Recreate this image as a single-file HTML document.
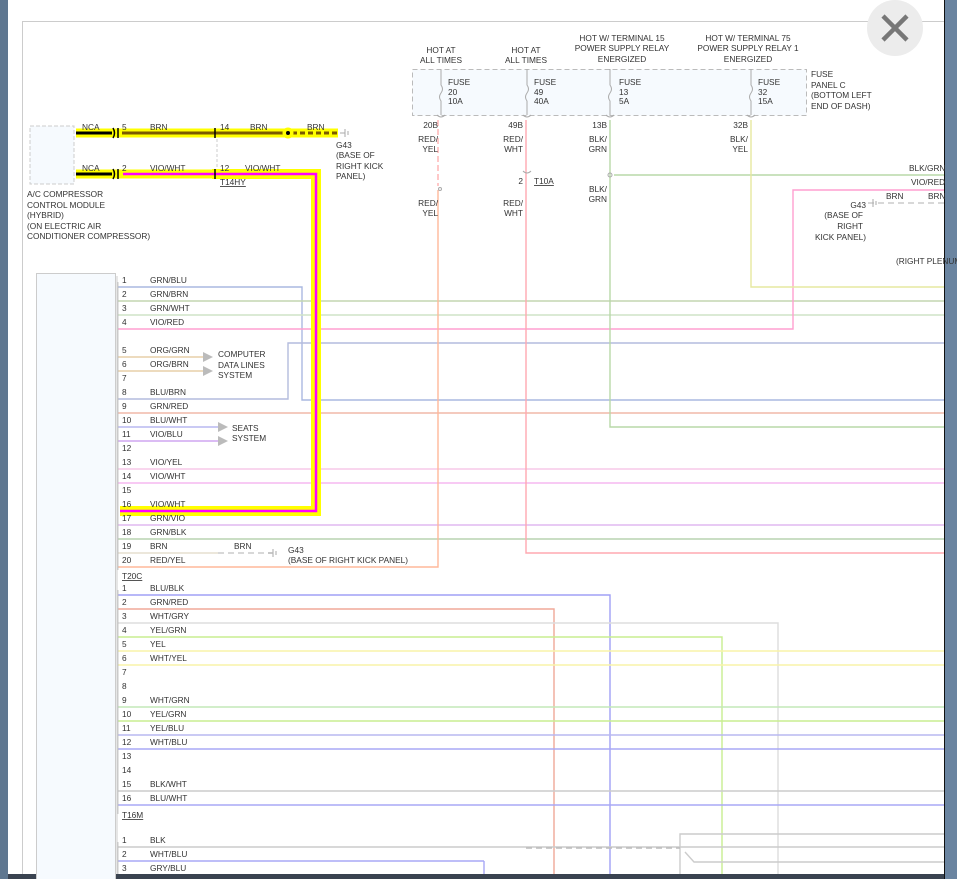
<!DOCTYPE html>
<html><head><meta charset="utf-8"><style>
html,body{margin:0;padding:0;width:957px;height:879px;overflow:hidden;background:#fff}
svg{display:block}
text{font-family:"Liberation Sans",sans-serif;font-size:8.3px;fill:#333}
</style></head><body>
<svg width="957" height="879" viewBox="0 0 957 879" xmlns="http://www.w3.org/2000/svg">
<rect x="0" y="0" width="957" height="879" fill="#fff"/>
<rect x="0" y="0" width="8" height="879" fill="#5f7790"/>
<rect x="944" y="0" width="13" height="879" fill="#6a84a0"/>
<line x1="944.5" y1="0" x2="944.5" y2="879" stroke="#111" stroke-width="1"/>
<rect x="8" y="874" width="936" height="5" fill="#3a4350"/>
<line x1="22.5" y1="21" x2="22.5" y2="874" stroke="#ccc"/>
<line x1="22" y1="21.5" x2="944" y2="21.5" stroke="#ccc"/>
<rect x="36.5" y="273.5" width="79" height="610" fill="#f6fafe" stroke="#ccc"/>
<line x1="117" y1="276" x2="117" y2="874" stroke="#ccc"/>
<rect x="30" y="126" width="44" height="58" fill="#f6fafe" stroke="#ccc" stroke-dasharray="4,2"/>
<g fill="none" stroke-width="1.4">
<polyline points="118,287 302,287 302,400 944,400" stroke="#aab8e0"/>
<line x1="118" y1="301" x2="944" y2="301" stroke="#c3d6b0"/>
<line x1="118" y1="315" x2="944" y2="315" stroke="#cfe3c7"/>
<polyline points="118,329 793,329 793,190 944,190" stroke="#ff9fd0"/>
<polyline points="118,399 288,399 288,343 944,343" stroke="#b4bcdd"/>
<line x1="118" y1="357" x2="205" y2="357" stroke="#e7cfa8"/>
<line x1="118" y1="371" x2="205" y2="371" stroke="#e7cfa8"/>
<line x1="118" y1="413" x2="944" y2="413" stroke="#f0b8a8"/>
<line x1="118" y1="427" x2="220" y2="427" stroke="#b8b8f0"/>
<line x1="118" y1="441" x2="220" y2="441" stroke="#cfa5f0"/>
<line x1="118" y1="469" x2="944" y2="469" stroke="#f7c8e8"/>
<line x1="118" y1="483" x2="944" y2="483" stroke="#f5b8f0"/>
<line x1="118" y1="525" x2="944" y2="525" stroke="#e0b8f0"/>
<line x1="118" y1="539" x2="944" y2="539" stroke="#b8d4b0"/>
<line x1="118" y1="553" x2="218" y2="553" stroke="#e6dfcf"/>
<line x1="218" y1="553" x2="272" y2="553" stroke="#ccc" stroke-dasharray="6,4"/>
<polyline points="118,567 438,567 438,190" stroke="#ffb89a"/>
<line x1="438" y1="120" x2="438" y2="186" stroke="#ffb0b0" stroke-dasharray="6,3"/>
<polyline points="526,120 526,553 944,553" stroke="#ffa8b0"/>
<polyline points="610,120 610,427 944,427" stroke="#b8d8a8"/>
<line x1="614" y1="175" x2="944" y2="175" stroke="#b8d8a8"/>
<polyline points="751,120 751,287 944,287" stroke="#e6e8a0"/>
<line x1="868" y1="203" x2="944" y2="203" stroke="#ccc" stroke-dasharray="6,4"/>
<polyline points="118,595 610,595 610,874" stroke="#a0a0f5"/>
<polyline points="118,609 554,609 554,874" stroke="#f0a898"/>
<polyline points="118,623 778,623 778,874" stroke="#ddd"/>
<polyline points="118,637 722,637 722,874" stroke="#c8ee90"/>
<line x1="118" y1="651" x2="944" y2="651" stroke="#f8f4a8"/>
<line x1="118" y1="665" x2="944" y2="665" stroke="#f8f4a8"/>
<line x1="118" y1="707" x2="944" y2="707" stroke="#c4e8b8"/>
<line x1="118" y1="721" x2="944" y2="721" stroke="#c8ee90"/>
<line x1="118" y1="735" x2="944" y2="735" stroke="#b8b8f0"/>
<line x1="118" y1="749" x2="944" y2="749" stroke="#a8a8f5"/>
<line x1="118" y1="791" x2="944" y2="791" stroke="#ccc"/>
<line x1="118" y1="805" x2="944" y2="805" stroke="#a8a8f5"/>
<line x1="118" y1="847" x2="944" y2="847" stroke="#ccc"/>
<line x1="118" y1="861" x2="484" y2="861" stroke="#a8a8f5"/>
<line x1="484" y1="861" x2="484" y2="874" stroke="#a8a8f5"/>
<polyline points="680,874 680,834 944,834" stroke="#ccc"/>
<polyline points="685,852 694,862 944,862" stroke="#ccc"/>
<line x1="526" y1="848" x2="680" y2="848" stroke="#bbb" stroke-dasharray="6,4"/>
</g>
<g fill="#bbb"><polygon points="203,352 213,357 203,362"/><polygon points="203,366 213,371 203,376"/><polygon points="218,422 228,427 218,432"/><polygon points="218,436 228,441 218,446"/></g>
<g stroke="#bbb" fill="none" stroke-width="0.8">
<path d="M118,282 v288 M118,590 v224 M118,842 v32"/>
</g>
<g fill="none">
<line x1="76" y1="133" x2="338" y2="133" stroke="#ffff00" stroke-width="9"/>
<line x1="76" y1="174" x2="220" y2="174" stroke="#ffff00" stroke-width="9"/>
<polyline points="120,511 316,511 316,174 212,174" stroke="#ffff00" stroke-width="10"/>
<polyline points="120,511 316,511 316,174 123,174" stroke="#ff00ff" stroke-width="2.5"/>
<line x1="76" y1="133" x2="112" y2="133" stroke="#000" stroke-width="3"/>
<line x1="76" y1="174" x2="112" y2="174" stroke="#000" stroke-width="3"/>
<line x1="122" y1="133" x2="284" y2="133" stroke="#7a5a00" stroke-width="3"/>
<line x1="292" y1="133" x2="338" y2="133" stroke="#7a5a00" stroke-width="3" stroke-dasharray="5,3"/>
<line x1="217" y1="139" x2="217" y2="168" stroke="#ccc" stroke-dasharray="3,2"/>
</g>
<circle cx="288" cy="133" r="5.5" fill="#ffff00"/><circle cx="288" cy="133" r="2" fill="#000"/>
<g stroke="#000" stroke-width="1.5" fill="none"><path d="M113,128 q3,5 0,10 M118,128 v10 M113,169 q3,5 0,10 M118,169 v10 M215,128 v10 M215,169 v10"/></g>
<g stroke="#aaa" fill="none"><path d="M345,129 v8 M348,131 v4 M340,133 h5 M273,549 v8 M276,551 v4 M268,553 h5 M873,199 v8 M876,201 v4"/></g>
<rect x="412.5" y="69.5" width="394" height="46" fill="#f6fafe" stroke="#bbb" stroke-dasharray="5,3"/>
<g stroke="#aaa" fill="none">
<path d="M441,69 v16 q3,4 0,8 q-3,4 0,8 v14 M437,115 q4,4 8,0"/>
<path d="M527,69 v16 q3,4 0,8 q-3,4 0,8 v14 M523,115 q4,4 8,0 M523,171 q4,4 8,0"/>
<path d="M610,69 v16 q3,4 0,8 q-3,4 0,8 v14 M606,115 q4,4 8,0"/>
<path d="M751,69 v16 q3,4 0,8 q-3,4 0,8 v14 M747,115 q4,4 8,0"/>
</g>
<circle cx="440" cy="189" r="1.5" fill="none" stroke="#aaa"/><circle cx="610" cy="175" r="2" fill="none" stroke="#aaa"/>
<circle cx="895" cy="28" r="28" fill="#ececec"/>
<path d="M883,16 L907,40 M907,16 L883,40" stroke="#777" stroke-width="4.5"/>
<text x="82" y="130">NCA</text><text x="122" y="130">5</text><text x="150" y="130">BRN</text><text x="220" y="130">14</text><text x="250" y="130">BRN</text><text x="307" y="130">BRN</text>
<text x="82" y="171">NCA</text><text x="122" y="171">2</text><text x="150" y="171">VIO/WHT</text><text x="220" y="171">12</text><text x="245" y="171">VIO/WHT</text>
<text x="220" y="185" text-decoration="underline">T14HY</text>
<text x="336" y="148">G43</text><text x="336" y="158">(BASE OF</text><text x="336" y="169">RIGHT KICK</text><text x="336" y="179">PANEL)</text>
<text x="27" y="197">A/C COMPRESSOR</text><text x="27" y="208">CONTROL MODULE</text><text x="27" y="218">(HYBRID)</text><text x="27" y="229">(ON ELECTRIC AIR</text><text x="27" y="239">CONDITIONER COMPRESSOR)</text>
<g text-anchor="middle">
<text x="441" y="53">HOT AT</text><text x="441" y="63">ALL TIMES</text>
<text x="526" y="53">HOT AT</text><text x="526" y="63">ALL TIMES</text>
<text x="622" y="41">HOT W/ TERMINAL 15</text><text x="622" y="51">POWER SUPPLY RELAY</text><text x="622" y="62">ENERGIZED</text>
<text x="748" y="41">HOT W/ TERMINAL 75</text><text x="748" y="51">POWER SUPPLY RELAY 1</text><text x="748" y="62">ENERGIZED</text>
</g>
<text x="448" y="85">FUSE</text><text x="448" y="95">20</text><text x="448" y="104">10A</text>
<text x="534" y="85">FUSE</text><text x="534" y="95">49</text><text x="534" y="104">40A</text>
<text x="619" y="85">FUSE</text><text x="619" y="95">13</text><text x="619" y="104">5A</text>
<text x="758" y="85">FUSE</text><text x="758" y="95">32</text><text x="758" y="104">15A</text>
<text x="811" y="77">FUSE</text><text x="811" y="88">PANEL C</text><text x="811" y="98">(BOTTOM LEFT</text><text x="811" y="109">END OF DASH)</text>
<g text-anchor="end">
<text x="438" y="128">20B</text><text x="438" y="142">RED/</text><text x="438" y="152">YEL</text><text x="438" y="206">RED/</text><text x="438" y="216">YEL</text>
<text x="523" y="128">49B</text><text x="523" y="142">RED/</text><text x="523" y="152">WHT</text><text x="523" y="184">2</text><text x="523" y="206">RED/</text><text x="523" y="216">WHT</text>
<text x="607" y="128">13B</text><text x="607" y="142">BLK/</text><text x="607" y="152">GRN</text><text x="607" y="192">BLK/</text><text x="607" y="202">GRN</text>
<text x="748" y="128">32B</text><text x="748" y="142">BLK/</text><text x="748" y="152">YEL</text>
<text x="866" y="208">G43</text><text x="863" y="218">(BASE OF</text><text x="863" y="229">RIGHT</text><text x="866" y="240">KICK PANEL)</text>
</g>
<text x="534" y="184" text-decoration="underline">T10A</text>
<text x="909" y="171">BLK/GRN</text><text x="911" y="185">VIO/RED</text>
<text x="886" y="199">BRN</text><text x="928" y="199">BRN</text><text x="896" y="264">(RIGHT PLENUM</text>
<g>
<text x="122" y="283">1</text><text x="150" y="283">GRN/BLU</text>
<text x="122" y="297">2</text><text x="150" y="297">GRN/BRN</text>
<text x="122" y="311">3</text><text x="150" y="311">GRN/WHT</text>
<text x="122" y="325">4</text><text x="150" y="325">VIO/RED</text>
<text x="122" y="353">5</text><text x="150" y="353">ORG/GRN</text>
<text x="122" y="367">6</text><text x="150" y="367">ORG/BRN</text>
<text x="122" y="381">7</text>
<text x="122" y="395">8</text><text x="150" y="395">BLU/BRN</text>
<text x="122" y="409">9</text><text x="150" y="409">GRN/RED</text>
<text x="122" y="423">10</text><text x="150" y="423">BLU/WHT</text>
<text x="122" y="437">11</text><text x="150" y="437">VIO/BLU</text>
<text x="122" y="451">12</text>
<text x="122" y="465">13</text><text x="150" y="465">VIO/YEL</text>
<text x="122" y="479">14</text><text x="150" y="479">VIO/WHT</text>
<text x="122" y="493">15</text>
<text x="122" y="507">16</text><text x="150" y="507">VIO/WHT</text>
<text x="122" y="521">17</text><text x="150" y="521">GRN/VIO</text>
<text x="122" y="535">18</text><text x="150" y="535">GRN/BLK</text>
<text x="122" y="549">19</text><text x="150" y="549">BRN</text><text x="234" y="549">BRN</text>
<text x="122" y="563">20</text><text x="150" y="563">RED/YEL</text>
<text x="122" y="579" text-decoration="underline">T20C</text>
<text x="218" y="357">COMPUTER</text><text x="218" y="368">DATA LINES</text><text x="218" y="378">SYSTEM</text>
<text x="232" y="431">SEATS</text><text x="232" y="441">SYSTEM</text>
<text x="288" y="553">G43</text><text x="288" y="563">(BASE OF RIGHT KICK PANEL)</text>
</g>
<g>
<text x="122" y="591">1</text><text x="150" y="591">BLU/BLK</text>
<text x="122" y="605">2</text><text x="150" y="605">GRN/RED</text>
<text x="122" y="619">3</text><text x="150" y="619">WHT/GRY</text>
<text x="122" y="633">4</text><text x="150" y="633">YEL/GRN</text>
<text x="122" y="647">5</text><text x="150" y="647">YEL</text>
<text x="122" y="661">6</text><text x="150" y="661">WHT/YEL</text>
<text x="122" y="675">7</text><text x="122" y="689">8</text>
<text x="122" y="703">9</text><text x="150" y="703">WHT/GRN</text>
<text x="122" y="717">10</text><text x="150" y="717">YEL/GRN</text>
<text x="122" y="731">11</text><text x="150" y="731">YEL/BLU</text>
<text x="122" y="745">12</text><text x="150" y="745">WHT/BLU</text>
<text x="122" y="759">13</text><text x="122" y="773">14</text>
<text x="122" y="787">15</text><text x="150" y="787">BLK/WHT</text>
<text x="122" y="801">16</text><text x="150" y="801">BLU/WHT</text>
<text x="122" y="818" text-decoration="underline">T16M</text>
<text x="122" y="843">1</text><text x="150" y="843">BLK</text>
<text x="122" y="857">2</text><text x="150" y="857">WHT/BLU</text>
<text x="122" y="871">3</text><text x="150" y="871">GRY/BLU</text>
</g>
</svg>
</body></html>
